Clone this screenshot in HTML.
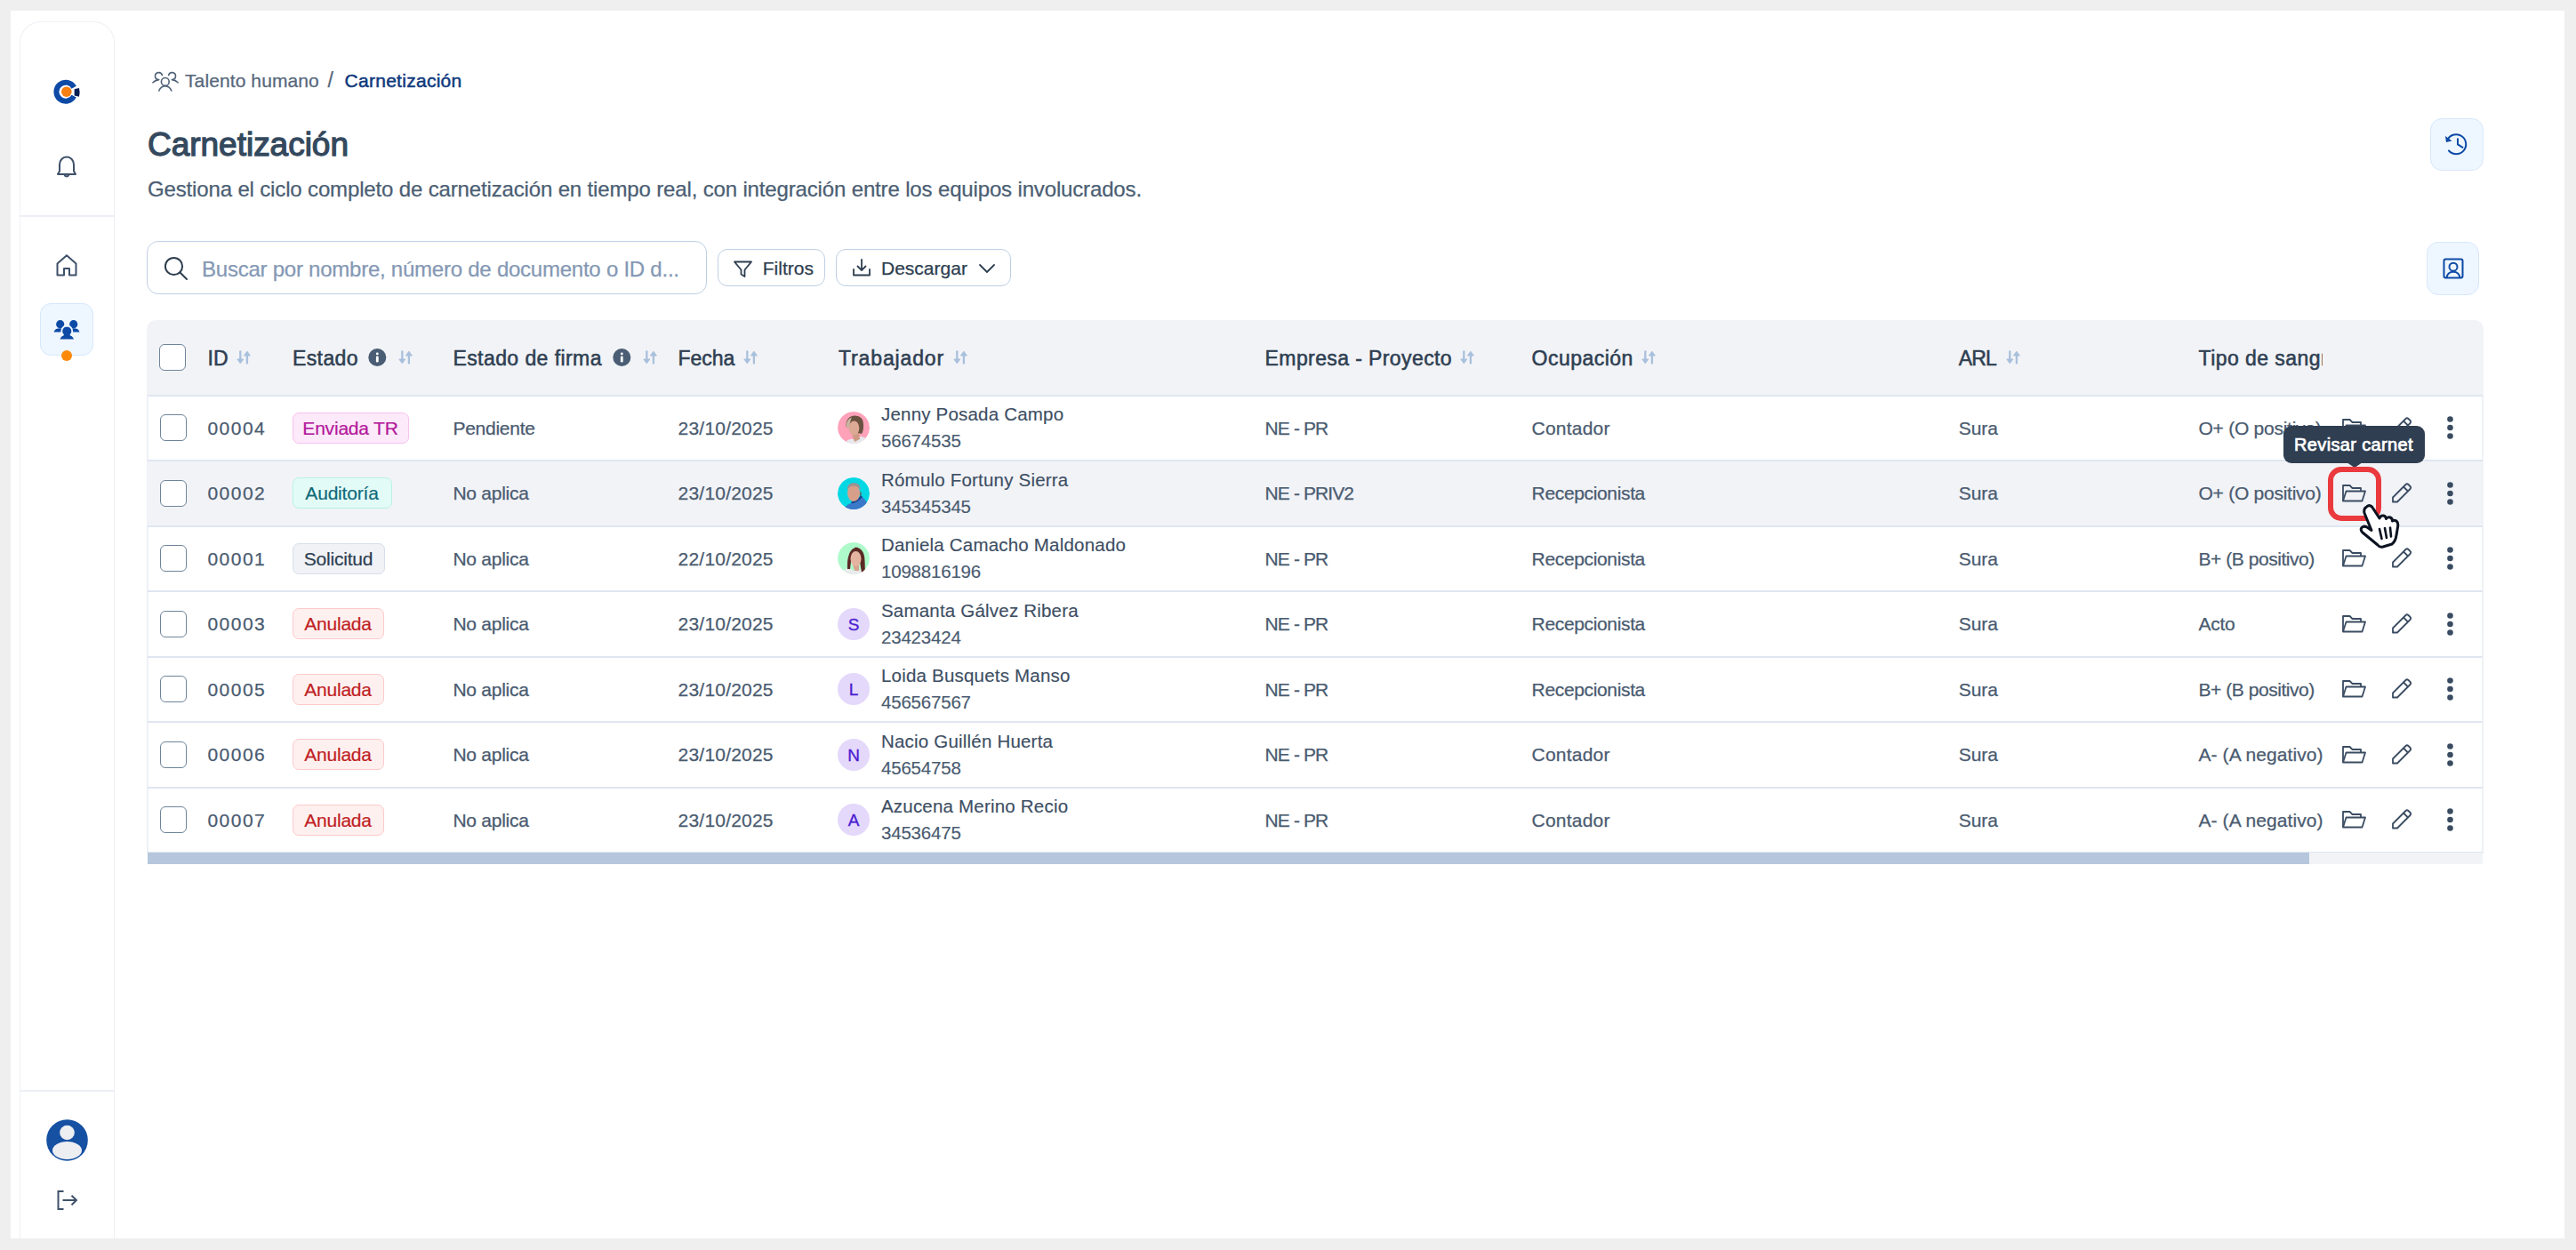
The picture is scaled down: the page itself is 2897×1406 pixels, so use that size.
<!DOCTYPE html>
<html><head><meta charset="utf-8"><title>Carnetización</title>
<style>
html,body{margin:0;padding:0;}
body{width:2897px;height:1406px;overflow:hidden;background:#efefef;position:relative;font-family:'Liberation Sans', sans-serif;}
.a{position:absolute;box-sizing:border-box;}
.t{position:absolute;white-space:nowrap;line-height:1;font-family:'Liberation Sans', sans-serif;}
</style></head><body>

<div class="a" style="left:12px;top:12px;width:2872px;height:1381px;background:#ffffff;"></div>
<div class="a" style="left:21.5px;top:24px;width:107.5px;height:1369px;border:1.7px solid #edf0f4;border-bottom:none;border-radius:24px 24px 0 0;background:#fff;"></div>
<div class="a" style="left:23px;top:241.5px;width:105px;height:2px;background:#eceff5;"></div>
<div class="a" style="left:23px;top:1226px;width:105px;height:2px;background:#eceff5;"></div>
<svg class="a" style="left:58px;top:87px;" width="34" height="34" viewBox="0 0 34 34">
<path d="M25.17 11.27 A10.5 10.5 0 1 0 25.17 21.13" fill="none" stroke="#0d4aa6" stroke-width="6"/>
<circle cx="16.8" cy="16.2" r="5.8" fill="#f57f11"/>
<path d="M25.6 13.3 L31.0 11.9 Q32.2 16.9 31.0 21.8 L25.6 20.4 Z" fill="#061f55"/>
</svg>
<svg class="a" style="left:62px;top:174px;" width="26" height="27" viewBox="0 0 26 27">
<path d="M3 22 L5 18.5 L5 11 A8 8.5 0 0 1 21 11 L21 18.5 L23 22 Z" fill="none" stroke="#3f5169" stroke-width="2" stroke-linejoin="round"/>
<path d="M10.5 22.5 A2.6 2.6 0 0 0 15.5 22.5" fill="none" stroke="#3f5169" stroke-width="2"/>
</svg>
<svg class="a" style="left:62px;top:285px;" width="26" height="27" viewBox="0 0 26 27">
<path d="M2.5 11.5 L13 2.2 L23.5 11.5 L23.5 24.5 L16 24.5 L16 17 L10 17 L10 24.5 L2.5 24.5 Z" fill="none" stroke="#3f5169" stroke-width="2" stroke-linejoin="round"/>
</svg>
<div class="a" style="left:45px;top:341px;width:60px;height:59px;background:#eef6ff;border:1.5px solid #d6e8fb;border-radius:12px;"></div>
<svg class="a" style="left:59px;top:356px;" width="32" height="28" viewBox="0 0 32 28">
<g fill="#0d4aa6">
<circle cx="8.7" cy="8.7" r="4.6"/><path d="M1.5 17.6 Q2.5 13.2 8.7 13.2 Q11 13.2 12.5 14 L11 17.6 Z"/>
<circle cx="23.7" cy="8.7" r="4.6"/><path d="M30.5 17.6 Q29.5 13.2 23.7 13.2 Q21.4 13.2 20 14 L21.5 17.6 Z"/>
</g>
<g fill="#0d4aa6" stroke="#eef6ff" stroke-width="1.8" stroke-linejoin="round">
<path d="M16.2 10.5 A6 6 0 0 1 20.5 20.6 Q24.5 22 25 26.5 L7.5 26.5 Q8 22 12 20.6 A6 6 0 0 1 16.2 10.5 Z"/>
</g>
</svg>
<div class="a" style="left:69px;top:394px;width:12px;height:12px;border-radius:50%;background:#fb8a0b;"></div>
<svg class="a" style="left:52px;top:1259px;" width="47" height="47" viewBox="0 0 47 47">
<circle cx="23.5" cy="23.5" r="23.3" fill="#1550a3"/>
<clipPath id="uc"><circle cx="23.5" cy="23.5" r="23.3"/></clipPath>
<g clip-path="url(#uc)" fill="#eceef2">
<circle cx="23.5" cy="15" r="8.3"/>
<ellipse cx="23.5" cy="35" rx="16.5" ry="10"/>
</g>
</svg>
<svg class="a" style="left:64px;top:1338px;" width="25" height="24" viewBox="0 0 25 24">
<path d="M7.5 2 L1.5 2 L1.5 22 L7.5 22" fill="none" stroke="#3f5169" stroke-width="2"/>
<path d="M6.5 12 L22 12 M16.5 6.8 L22 12 L16.5 17.2" fill="none" stroke="#3f5169" stroke-width="2" stroke-linejoin="round"/>
</svg>
<svg class="a" style="left:170px;top:79px;" width="32" height="25" viewBox="0 0 32 25">
<g fill="none" stroke="#4f6176" stroke-width="1.6" stroke-linecap="round">
<path d="M12.36 5.56 A4 4 0 1 0 7.8 10.54"/><path d="M2 13.8 Q4.5 11 8.7 10.6"/>
<path d="M19.64 5.56 A4 4 0 1 1 24.2 10.54"/><path d="M30 13.8 Q27.5 11 23.3 10.6"/>
<circle cx="15.8" cy="12.9" r="4.4"/><path d="M8.8 23 Q11 17.9 15.8 17.6 Q20.6 17.9 22.8 23"/>
</g>
</svg>
<div class="t" style="left:208.0px;top:79.5px;font-size:21px;color:#56677b;font-weight:400;letter-spacing:0.1px;-webkit-text-stroke:0.25px #56677b;">Talento humano</div>
<div class="t" style="left:368.5px;top:79.0px;font-size:23px;color:#56677b;font-weight:400;letter-spacing:0px;-webkit-text-stroke:0.25px #56677b;">/</div>
<div class="t" style="left:387.5px;top:79.5px;font-size:21px;color:#0f3a7d;font-weight:400;letter-spacing:0.28px;-webkit-text-stroke:0.5px #0f3a7d;">Carnetización</div>
<div class="t" style="left:166.0px;top:144.4px;font-size:37px;color:#34495e;font-weight:400;letter-spacing:-0.02px;-webkit-text-stroke:1.3px #34495e;">Carnetización</div>
<div class="t" style="left:166.0px;top:201.2px;font-size:24px;color:#4b5e73;font-weight:400;letter-spacing:-0.15px;-webkit-text-stroke:0.25px #4b5e73;">Gestiona el ciclo completo de carnetización en tiempo real, con integración entre los equipos involucrados.</div>
<div class="a" style="left:2733px;top:133px;width:60px;height:59px;background:#eef6ff;border:1.5px solid #d6e8fb;border-radius:13px;"></div>
<svg class="a" style="left:2748px;top:149px;" width="30" height="28" viewBox="0 0 30 28">
<g fill="none" stroke="#0d4aa6" stroke-width="2" stroke-linecap="round" stroke-linejoin="round">
<path d="M4.6 8 A11 11 0 1 1 6 20.5"/>
<path d="M16 7.2 L16 13.4 L21.5 16.8"/>
</g>
<path d="M2 4 L3 11 L9.5 9.5 Z" fill="#0d4aa6"/>
</svg>
<div class="a" style="left:165px;top:271px;width:630px;height:60px;border:1.8px solid #bfcfe4;border-radius:13px;background:#fff;"></div>
<svg class="a" style="left:184px;top:288px;" width="28" height="28" viewBox="0 0 28 28">
<g fill="none" stroke="#2d3e50" stroke-width="2" stroke-linecap="round">
<circle cx="11.5" cy="11.5" r="9.6"/><path d="M18.5 18.5 L26 26"/>
</g>
</svg>
<div class="t" style="left:227.0px;top:290.7px;font-size:24px;color:#8498b4;font-weight:400;letter-spacing:-0.24px;-webkit-text-stroke:0.25px #8498b4;">Buscar por nombre, número de documento o ID d...</div>
<div class="a" style="left:807px;top:280px;width:121px;height:42px;border:1.6px solid #bfcfe4;border-radius:11px;background:#fff;"></div>
<svg class="a" style="left:824px;top:292px;" width="24" height="21" viewBox="0 0 24 21">
<path d="M2 2.5 L21 2.5 L13.5 11.5 L13.5 19 L9.5 16.5 L9.5 11.5 Z" fill="none" stroke="#2d3e50" stroke-width="1.8" stroke-linejoin="round"/>
</svg>
<div class="t" style="left:857.8px;top:291.2px;font-size:21px;color:#2d3e50;font-weight:400;letter-spacing:0px;-webkit-text-stroke:0.25px #2d3e50;">Filtros</div>
<div class="a" style="left:940px;top:280px;width:197px;height:42px;border:1.6px solid #bfcfe4;border-radius:11px;background:#fff;"></div>
<svg class="a" style="left:957px;top:290px;" width="24" height="22" viewBox="0 0 24 22">
<g fill="none" stroke="#2d3e50" stroke-width="1.8" stroke-linecap="round" stroke-linejoin="round">
<path d="M12 2 L12 13.5 M7.5 9.5 L12 14 L16.5 9.5"/>
<path d="M3 13 L3 19.5 L21 19.5 L21 13"/>
</g>
</svg>
<div class="t" style="left:991.0px;top:291.2px;font-size:21px;color:#2d3e50;font-weight:400;letter-spacing:0px;-webkit-text-stroke:0.25px #2d3e50;">Descargar</div>
<svg class="a" style="left:1100px;top:296px;" width="20" height="12" viewBox="0 0 20 12">
<path d="M2 2 L10 10 L18 2" fill="none" stroke="#2d3e50" stroke-width="1.8" stroke-linecap="round" stroke-linejoin="round"/>
</svg>
<div class="a" style="left:2729px;top:272px;width:59px;height:60px;background:#eef6ff;border:1.5px solid #d6e8fb;border-radius:13px;"></div>
<svg class="a" style="left:2746px;top:289px;" width="26" height="26" viewBox="0 0 26 26">
<g fill="none" stroke="#0d4aa6" stroke-width="2">
<rect x="2.5" y="2.5" width="21" height="21" rx="2"/>
<circle cx="13" cy="11.2" r="4.5"/>
<path d="M5.5 23.5 Q6.5 16.8 13 16.8 Q19.5 16.8 20.5 23.5"/>
</g>
</svg>
<div class="a" style="left:165px;top:360px;width:2628px;height:86px;background:#f2f3f7;border-radius:10px 10px 0 0;"></div>
<div class="a" style="left:165px;top:444px;width:2px;height:516px;background:#eef1f6;"></div>
<div class="a" style="left:2791px;top:444px;width:2px;height:516px;background:#eef1f6;"></div>
<div class="a" style="left:166px;top:518.0px;width:2626px;height:73.5px;background:#f2f3f7;"></div>
<div class="a" style="left:166px;top:443.5px;width:2626px;height:2px;background:#dfe6f0;"></div>
<div class="a" style="left:166px;top:517.0px;width:2626px;height:2px;background:#dfe6f0;"></div>
<div class="a" style="left:166px;top:590.5px;width:2626px;height:2px;background:#dfe6f0;"></div>
<div class="a" style="left:166px;top:664.0px;width:2626px;height:2px;background:#dfe6f0;"></div>
<div class="a" style="left:166px;top:737.5px;width:2626px;height:2px;background:#dfe6f0;"></div>
<div class="a" style="left:166px;top:811.0px;width:2626px;height:2px;background:#dfe6f0;"></div>
<div class="a" style="left:166px;top:884.5px;width:2626px;height:2px;background:#dfe6f0;"></div>
<div class="a" style="left:166px;top:958.0px;width:2626px;height:2px;background:#dfe6f0;"></div>
<div class="a" style="left:166px;top:958.5px;width:2626px;height:13.5px;background:#f1f3f6;"></div>
<div class="a" style="left:166px;top:958.5px;width:2431px;height:13.5px;background:#b6c7dd;"></div>
<div class="a" style="left:179px;top:387px;width:30px;height:30px;border:1.8px solid #6f849a;border-radius:6px;background:#fff;"></div>
<div class="t" style="left:233.4px;top:391.5px;font-size:23px;color:#2f3f52;font-weight:400;letter-spacing:0.3px;-webkit-text-stroke:0.55px #2f3f52;">ID</div>
<svg class="a" style="left:266px;top:394px;" width="16" height="17" viewBox="0 0 16 17"><g fill="none" stroke="#a9c0dc" stroke-width="2.3" stroke-linecap="round"><path d="M4.3 1.3 L4.3 11"/><path d="M11.9 14.6 L11.9 5"/></g>
<g fill="#a9c0dc" stroke="#a9c0dc" stroke-width="1" stroke-linejoin="round"><path d="M0.8 10 L7.8 10 L4.3 14.8 Z"/><path d="M8.4 6 L15.4 6 L11.9 1.2 Z"/></g></svg>
<div class="t" style="left:328.9px;top:391.5px;font-size:23px;color:#2f3f52;font-weight:400;letter-spacing:0.42px;-webkit-text-stroke:0.55px #2f3f52;">Estado</div>
<svg class="a" style="left:414px;top:392px;" width="21" height="21" viewBox="0 0 21 21"><circle cx="10.3" cy="10" r="10" fill="#4a5d74"/>
<rect x="8.9" y="4.6" width="2.8" height="2.6" rx="1.2" fill="#fff"/><rect x="8.9" y="8.6" width="2.8" height="6.8" rx="1.2" fill="#fff"/></svg>
<svg class="a" style="left:448px;top:394px;" width="16" height="17" viewBox="0 0 16 17"><g fill="none" stroke="#a9c0dc" stroke-width="2.3" stroke-linecap="round"><path d="M4.3 1.3 L4.3 11"/><path d="M11.9 14.6 L11.9 5"/></g>
<g fill="#a9c0dc" stroke="#a9c0dc" stroke-width="1" stroke-linejoin="round"><path d="M0.8 10 L7.8 10 L4.3 14.8 Z"/><path d="M8.4 6 L15.4 6 L11.9 1.2 Z"/></g></svg>
<div class="t" style="left:509.4px;top:391.5px;font-size:23px;color:#2f3f52;font-weight:400;letter-spacing:0.43px;-webkit-text-stroke:0.55px #2f3f52;">Estado de firma</div>
<svg class="a" style="left:689px;top:392px;" width="21" height="21" viewBox="0 0 21 21"><circle cx="10.3" cy="10" r="10" fill="#4a5d74"/>
<rect x="8.9" y="4.6" width="2.8" height="2.6" rx="1.2" fill="#fff"/><rect x="8.9" y="8.6" width="2.8" height="6.8" rx="1.2" fill="#fff"/></svg>
<svg class="a" style="left:723px;top:394px;" width="16" height="17" viewBox="0 0 16 17"><g fill="none" stroke="#a9c0dc" stroke-width="2.3" stroke-linecap="round"><path d="M4.3 1.3 L4.3 11"/><path d="M11.9 14.6 L11.9 5"/></g>
<g fill="#a9c0dc" stroke="#a9c0dc" stroke-width="1" stroke-linejoin="round"><path d="M0.8 10 L7.8 10 L4.3 14.8 Z"/><path d="M8.4 6 L15.4 6 L11.9 1.2 Z"/></g></svg>
<div class="t" style="left:762.6px;top:391.5px;font-size:23px;color:#2f3f52;font-weight:400;letter-spacing:-0.07px;-webkit-text-stroke:0.55px #2f3f52;">Fecha</div>
<svg class="a" style="left:836px;top:394px;" width="16" height="17" viewBox="0 0 16 17"><g fill="none" stroke="#a9c0dc" stroke-width="2.3" stroke-linecap="round"><path d="M4.3 1.3 L4.3 11"/><path d="M11.9 14.6 L11.9 5"/></g>
<g fill="#a9c0dc" stroke="#a9c0dc" stroke-width="1" stroke-linejoin="round"><path d="M0.8 10 L7.8 10 L4.3 14.8 Z"/><path d="M8.4 6 L15.4 6 L11.9 1.2 Z"/></g></svg>
<div class="t" style="left:943.0px;top:391.5px;font-size:23px;color:#2f3f52;font-weight:400;letter-spacing:0.86px;-webkit-text-stroke:0.55px #2f3f52;">Trabajador</div>
<svg class="a" style="left:1071.5px;top:394px;" width="16" height="17" viewBox="0 0 16 17"><g fill="none" stroke="#a9c0dc" stroke-width="2.3" stroke-linecap="round"><path d="M4.3 1.3 L4.3 11"/><path d="M11.9 14.6 L11.9 5"/></g>
<g fill="#a9c0dc" stroke="#a9c0dc" stroke-width="1" stroke-linejoin="round"><path d="M0.8 10 L7.8 10 L4.3 14.8 Z"/><path d="M8.4 6 L15.4 6 L11.9 1.2 Z"/></g></svg>
<div class="t" style="left:1422.6px;top:391.5px;font-size:23px;color:#2f3f52;font-weight:400;letter-spacing:0.4px;-webkit-text-stroke:0.55px #2f3f52;">Empresa - Proyecto</div>
<svg class="a" style="left:1642px;top:394px;" width="16" height="17" viewBox="0 0 16 17"><g fill="none" stroke="#a9c0dc" stroke-width="2.3" stroke-linecap="round"><path d="M4.3 1.3 L4.3 11"/><path d="M11.9 14.6 L11.9 5"/></g>
<g fill="#a9c0dc" stroke="#a9c0dc" stroke-width="1" stroke-linejoin="round"><path d="M0.8 10 L7.8 10 L4.3 14.8 Z"/><path d="M8.4 6 L15.4 6 L11.9 1.2 Z"/></g></svg>
<div class="t" style="left:1722.6px;top:391.5px;font-size:23px;color:#2f3f52;font-weight:400;letter-spacing:0.47px;-webkit-text-stroke:0.55px #2f3f52;">Ocupación</div>
<svg class="a" style="left:1846px;top:394px;" width="16" height="17" viewBox="0 0 16 17"><g fill="none" stroke="#a9c0dc" stroke-width="2.3" stroke-linecap="round"><path d="M4.3 1.3 L4.3 11"/><path d="M11.9 14.6 L11.9 5"/></g>
<g fill="#a9c0dc" stroke="#a9c0dc" stroke-width="1" stroke-linejoin="round"><path d="M0.8 10 L7.8 10 L4.3 14.8 Z"/><path d="M8.4 6 L15.4 6 L11.9 1.2 Z"/></g></svg>
<div class="t" style="left:2202.7px;top:391.5px;font-size:23px;color:#2f3f52;font-weight:400;letter-spacing:-0.82px;-webkit-text-stroke:0.55px #2f3f52;">ARL</div>
<svg class="a" style="left:2256px;top:394px;" width="16" height="17" viewBox="0 0 16 17"><g fill="none" stroke="#a9c0dc" stroke-width="2.3" stroke-linecap="round"><path d="M4.3 1.3 L4.3 11"/><path d="M11.9 14.6 L11.9 5"/></g>
<g fill="#a9c0dc" stroke="#a9c0dc" stroke-width="1" stroke-linejoin="round"><path d="M0.8 10 L7.8 10 L4.3 14.8 Z"/><path d="M8.4 6 L15.4 6 L11.9 1.2 Z"/></g></svg>
<div class="a" style="left:2470px;top:380px;width:142px;height:40px;overflow:hidden;">
<div class="t" style="left:2.5px;top:11.5px;font-size:23px;color:#2f3f52;font-weight:400;letter-spacing:0.45px;-webkit-text-stroke:0.55px #2f3f52">Tipo de sangre</div></div>
<div class="a" style="left:180px;top:466.25px;width:30px;height:30px;border:1.8px solid #6f849a;border-radius:6px;background:#fff;"></div>
<div class="t" style="left:233.4px;top:470.7px;font-size:21px;color:#4a5b70;font-weight:400;letter-spacing:1.5px;-webkit-text-stroke:0.25px #4a5b70;">00004</div>
<div class="a" style="left:328.5px;top:463.6px;width:131px;height:35px;background:#fce9f9;border:1.5px solid #f6c3ef;border-radius:7px;"></div>
<div class="t" style="left:328.5px;width:131px;text-align:center;top:470.7px;font-size:21px;color:#b3179b;letter-spacing:-0.2px;-webkit-text-stroke:0.2px #b3179b">Enviada TR</div>
<div class="t" style="left:509.4px;top:470.7px;font-size:21px;color:#4a5b70;font-weight:400;letter-spacing:-0.25px;-webkit-text-stroke:0.25px #4a5b70;">Pendiente</div>
<div class="t" style="left:762.6px;top:470.7px;font-size:21px;color:#4a5b70;font-weight:400;letter-spacing:0.2px;-webkit-text-stroke:0.25px #4a5b70;">23/10/2025</div>
<svg class="a" style="left:942px;top:463px;" width="36" height="36" viewBox="0 0 36 36"><clipPath id="c0"><circle cx="18" cy="18" r="18"/></clipPath><g clip-path="url(#c0)"><circle cx="18" cy="18" r="18" fill="#fea1b9"/>
<path d="M9 36 L10 33 Q14 30 18 31 L24 28 Q30 28 33 31 L36 36 Z" fill="#e6e9ee"/>
<path d="M16 25 L24 24 L25 31 L19 34 Z" fill="#cf9a83"/>
<path d="M9.5 17 Q9 5 19.5 4.5 Q29 5 29 14 Q29.5 21 27 25 L23 24 Z" fill="#6a5140"/>
<path d="M9.5 17 Q10 8 16 6.5 Q13 12 14 20 Z" fill="#c9b59f"/>
<ellipse cx="18.5" cy="18.5" rx="5.8" ry="8" fill="#dca995"/></g></svg>
<div class="t" style="left:991.0px;top:456.3px;font-size:20.5px;color:#3d4e63;font-weight:400;letter-spacing:0.2px;-webkit-text-stroke:0.15px #3d4e63;">Jenny Posada Campo</div>
<div class="t" style="left:991.0px;top:486.1px;font-size:20.5px;color:#4a5b70;font-weight:400;letter-spacing:-0.2px;-webkit-text-stroke:0.15px #4a5b70;">56674535</div>
<div class="t" style="left:1422.6px;top:470.7px;font-size:21px;color:#4a5b70;font-weight:400;letter-spacing:-0.9px;-webkit-text-stroke:0.25px #4a5b70;">NE - PR</div>
<div class="t" style="left:1722.6px;top:470.7px;font-size:21px;color:#4a5b70;font-weight:400;letter-spacing:0.2px;-webkit-text-stroke:0.25px #4a5b70;">Contador</div>
<div class="t" style="left:2202.7px;top:470.7px;font-size:21px;color:#4a5b70;font-weight:400;letter-spacing:0px;-webkit-text-stroke:0.25px #4a5b70;">Sura</div>
<div class="t" style="left:2472.5px;top:470.7px;font-size:21px;color:#4a5b70;font-weight:400;letter-spacing:-0.25px;-webkit-text-stroke:0.25px #4a5b70;">O+ (O positivo)</div>
<svg class="a" style="left:2633px;top:470px;" width="29" height="22" viewBox="0 0 29 22"><g fill="none" stroke="#3a4c62" stroke-width="1.8" stroke-linejoin="round">
<path d="M2 19.5 L2 2 L9.5 2 L12.5 5 L22 5 L22 8.5"/>
<path d="M2 19.5 L5.5 8.5 L27 8.5 L23.5 19.5 Z"/></g></svg>
<svg class="a" style="left:2689px;top:468px;" width="25" height="25" viewBox="0 0 25 25"><g fill="none" stroke="#3a4c62" stroke-width="1.8" stroke-linejoin="round">
<path d="M2 17.5 L16.5 3 Q18 1.5 19.5 3 L21.5 5 Q23 6.5 21.5 8 L7 22.5 L2 22.5 Z"/><path d="M14 5.5 L19 10.5"/></g></svg>
<svg class="a" style="left:2749px;top:466px;" width="13" height="30" viewBox="0 0 13 30"><g fill="#3a4c62"><circle cx="6.5" cy="5.5" r="3.3"/><circle cx="6.5" cy="15" r="3.3"/><circle cx="6.5" cy="24.5" r="3.3"/></g></svg>
<div class="a" style="left:180px;top:539.75px;width:30px;height:30px;border:1.8px solid #6f849a;border-radius:6px;background:#fff;"></div>
<div class="t" style="left:233.4px;top:544.2px;font-size:21px;color:#4a5b70;font-weight:400;letter-spacing:1.5px;-webkit-text-stroke:0.25px #4a5b70;">00002</div>
<div class="a" style="left:328.5px;top:537.1px;width:112px;height:35px;background:#e3fbf7;border:1.5px solid #b8f1e6;border-radius:7px;"></div>
<div class="t" style="left:328.5px;width:112px;text-align:center;top:544.2px;font-size:21px;color:#0f6a7a;letter-spacing:-0.2px;-webkit-text-stroke:0.2px #0f6a7a">Auditoría</div>
<div class="t" style="left:509.4px;top:544.2px;font-size:21px;color:#4a5b70;font-weight:400;letter-spacing:-0.25px;-webkit-text-stroke:0.25px #4a5b70;">No aplica</div>
<div class="t" style="left:762.6px;top:544.2px;font-size:21px;color:#4a5b70;font-weight:400;letter-spacing:0.2px;-webkit-text-stroke:0.25px #4a5b70;">23/10/2025</div>
<svg class="a" style="left:942px;top:537px;" width="36" height="36" viewBox="0 0 36 36"><clipPath id="c1"><circle cx="18" cy="18" r="18"/></clipPath><g clip-path="url(#c1)"><circle cx="18" cy="18" r="18" fill="#01d8e4"/>
<path d="M7 36 Q9 31 15 29 Q22 26 28 22 Q33 26 36 36 Z" fill="#3a78c9"/>
<path d="M15 29 Q20 30 28 22 L26 20 Q22 27 16 27 Z" fill="#1d3f86"/>
<ellipse cx="18" cy="17.5" rx="7" ry="9.5" fill="#d79f8a"/>
<path d="M10.5 14 Q11 6 18.5 6 Q26 6.5 25.8 15 Q24 10 18.5 9.5 Q13 9.5 10.5 14 Z" fill="#9a9394"/>
<path d="M25.8 15 L27 19 L25 21 Z" fill="#7a4a3e"/></g></svg>
<div class="t" style="left:991.0px;top:529.8px;font-size:20.5px;color:#3d4e63;font-weight:400;letter-spacing:0.2px;-webkit-text-stroke:0.15px #3d4e63;">Rómulo Fortuny Sierra</div>
<div class="t" style="left:991.0px;top:559.6px;font-size:20.5px;color:#4a5b70;font-weight:400;letter-spacing:-0.2px;-webkit-text-stroke:0.15px #4a5b70;">345345345</div>
<div class="t" style="left:1422.6px;top:544.2px;font-size:21px;color:#4a5b70;font-weight:400;letter-spacing:-0.9px;-webkit-text-stroke:0.25px #4a5b70;">NE - PRIV2</div>
<div class="t" style="left:1722.6px;top:544.2px;font-size:21px;color:#4a5b70;font-weight:400;letter-spacing:-0.35px;-webkit-text-stroke:0.25px #4a5b70;">Recepcionista</div>
<div class="t" style="left:2202.7px;top:544.2px;font-size:21px;color:#4a5b70;font-weight:400;letter-spacing:0px;-webkit-text-stroke:0.25px #4a5b70;">Sura</div>
<div class="t" style="left:2472.5px;top:544.2px;font-size:21px;color:#4a5b70;font-weight:400;letter-spacing:-0.25px;-webkit-text-stroke:0.25px #4a5b70;">O+ (O positivo)</div>
<svg class="a" style="left:2633px;top:544px;" width="29" height="22" viewBox="0 0 29 22"><g fill="none" stroke="#3a4c62" stroke-width="1.8" stroke-linejoin="round">
<path d="M2 19.5 L2 2 L9.5 2 L12.5 5 L22 5 L22 8.5"/>
<path d="M2 19.5 L5.5 8.5 L27 8.5 L23.5 19.5 Z"/></g></svg>
<svg class="a" style="left:2689px;top:542px;" width="25" height="25" viewBox="0 0 25 25"><g fill="none" stroke="#3a4c62" stroke-width="1.8" stroke-linejoin="round">
<path d="M2 17.5 L16.5 3 Q18 1.5 19.5 3 L21.5 5 Q23 6.5 21.5 8 L7 22.5 L2 22.5 Z"/><path d="M14 5.5 L19 10.5"/></g></svg>
<svg class="a" style="left:2749px;top:540px;" width="13" height="30" viewBox="0 0 13 30"><g fill="#3a4c62"><circle cx="6.5" cy="5.5" r="3.3"/><circle cx="6.5" cy="15" r="3.3"/><circle cx="6.5" cy="24.5" r="3.3"/></g></svg>
<div class="a" style="left:180px;top:613.25px;width:30px;height:30px;border:1.8px solid #6f849a;border-radius:6px;background:#fff;"></div>
<div class="t" style="left:233.4px;top:617.7px;font-size:21px;color:#4a5b70;font-weight:400;letter-spacing:1.5px;-webkit-text-stroke:0.25px #4a5b70;">00001</div>
<div class="a" style="left:328.5px;top:610.6px;width:104px;height:35px;background:#f0f2f6;border:1.5px solid #d5dfeb;border-radius:7px;"></div>
<div class="t" style="left:328.5px;width:104px;text-align:center;top:617.7px;font-size:21px;color:#2d3e50;letter-spacing:-0.2px;-webkit-text-stroke:0.2px #2d3e50">Solicitud</div>
<div class="t" style="left:509.4px;top:617.7px;font-size:21px;color:#4a5b70;font-weight:400;letter-spacing:-0.25px;-webkit-text-stroke:0.25px #4a5b70;">No aplica</div>
<div class="t" style="left:762.6px;top:617.7px;font-size:21px;color:#4a5b70;font-weight:400;letter-spacing:0.2px;-webkit-text-stroke:0.25px #4a5b70;">22/10/2025</div>
<svg class="a" style="left:942px;top:610px;" width="36" height="36" viewBox="0 0 36 36"><clipPath id="c2"><circle cx="18" cy="18" r="18"/></clipPath><g clip-path="url(#c2)"><circle cx="18" cy="18" r="18" fill="#aefacb"/>
<path d="M4 36 Q6 30 12 29 L19 32 L27 30 Q32 32 34 36 Z" fill="#e9eaeb"/>
<path d="M11 30 Q10 9 20.5 5.5 Q30 7 30.5 20 Q31 31 30.5 34 L27 34 L25 22 L15 22 L14 30 Z" fill="#5c2a24"/>
<path d="M17 25 L24 25 L24 32 L19 32 Z" fill="#d9a48f"/>
<ellipse cx="20.5" cy="18.5" rx="6" ry="8.5" fill="#e4b4a0"/></g></svg>
<div class="t" style="left:991.0px;top:603.3px;font-size:20.5px;color:#3d4e63;font-weight:400;letter-spacing:0.2px;-webkit-text-stroke:0.15px #3d4e63;">Daniela Camacho Maldonado</div>
<div class="t" style="left:991.0px;top:633.1px;font-size:20.5px;color:#4a5b70;font-weight:400;letter-spacing:-0.2px;-webkit-text-stroke:0.15px #4a5b70;">1098816196</div>
<div class="t" style="left:1422.6px;top:617.7px;font-size:21px;color:#4a5b70;font-weight:400;letter-spacing:-0.9px;-webkit-text-stroke:0.25px #4a5b70;">NE - PR</div>
<div class="t" style="left:1722.6px;top:617.7px;font-size:21px;color:#4a5b70;font-weight:400;letter-spacing:-0.35px;-webkit-text-stroke:0.25px #4a5b70;">Recepcionista</div>
<div class="t" style="left:2202.7px;top:617.7px;font-size:21px;color:#4a5b70;font-weight:400;letter-spacing:0px;-webkit-text-stroke:0.25px #4a5b70;">Sura</div>
<div class="t" style="left:2472.5px;top:617.7px;font-size:21px;color:#4a5b70;font-weight:400;letter-spacing:-0.45px;-webkit-text-stroke:0.25px #4a5b70;">B+ (B positivo)</div>
<svg class="a" style="left:2633px;top:617px;" width="29" height="22" viewBox="0 0 29 22"><g fill="none" stroke="#3a4c62" stroke-width="1.8" stroke-linejoin="round">
<path d="M2 19.5 L2 2 L9.5 2 L12.5 5 L22 5 L22 8.5"/>
<path d="M2 19.5 L5.5 8.5 L27 8.5 L23.5 19.5 Z"/></g></svg>
<svg class="a" style="left:2689px;top:615px;" width="25" height="25" viewBox="0 0 25 25"><g fill="none" stroke="#3a4c62" stroke-width="1.8" stroke-linejoin="round">
<path d="M2 17.5 L16.5 3 Q18 1.5 19.5 3 L21.5 5 Q23 6.5 21.5 8 L7 22.5 L2 22.5 Z"/><path d="M14 5.5 L19 10.5"/></g></svg>
<svg class="a" style="left:2749px;top:613px;" width="13" height="30" viewBox="0 0 13 30"><g fill="#3a4c62"><circle cx="6.5" cy="5.5" r="3.3"/><circle cx="6.5" cy="15" r="3.3"/><circle cx="6.5" cy="24.5" r="3.3"/></g></svg>
<div class="a" style="left:180px;top:686.75px;width:30px;height:30px;border:1.8px solid #6f849a;border-radius:6px;background:#fff;"></div>
<div class="t" style="left:233.4px;top:691.2px;font-size:21px;color:#4a5b70;font-weight:400;letter-spacing:1.5px;-webkit-text-stroke:0.25px #4a5b70;">00003</div>
<div class="a" style="left:328.5px;top:684.1px;width:103px;height:35px;background:#fff0f0;border:1.5px solid #fdcaca;border-radius:7px;"></div>
<div class="t" style="left:328.5px;width:103px;text-align:center;top:691.2px;font-size:21px;color:#c01f24;letter-spacing:-0.2px;-webkit-text-stroke:0.2px #c01f24">Anulada</div>
<div class="t" style="left:509.4px;top:691.2px;font-size:21px;color:#4a5b70;font-weight:400;letter-spacing:-0.25px;-webkit-text-stroke:0.25px #4a5b70;">No aplica</div>
<div class="t" style="left:762.6px;top:691.2px;font-size:21px;color:#4a5b70;font-weight:400;letter-spacing:0.2px;-webkit-text-stroke:0.25px #4a5b70;">23/10/2025</div>
<div class="a" style="left:942px;top:683.8px;width:36px;height:36px;border-radius:50%;background:#e4d8fb;"></div>
<div class="t" style="left:942px;width:36px;text-align:center;top:692.7px;font-size:19px;color:#4b1fd1;-webkit-text-stroke:0.35px #4b1fd1;">S</div>
<div class="t" style="left:991.0px;top:676.8px;font-size:20.5px;color:#3d4e63;font-weight:400;letter-spacing:0.2px;-webkit-text-stroke:0.15px #3d4e63;">Samanta Gálvez Ribera</div>
<div class="t" style="left:991.0px;top:706.6px;font-size:20.5px;color:#4a5b70;font-weight:400;letter-spacing:-0.2px;-webkit-text-stroke:0.15px #4a5b70;">23423424</div>
<div class="t" style="left:1422.6px;top:691.2px;font-size:21px;color:#4a5b70;font-weight:400;letter-spacing:-0.9px;-webkit-text-stroke:0.25px #4a5b70;">NE - PR</div>
<div class="t" style="left:1722.6px;top:691.2px;font-size:21px;color:#4a5b70;font-weight:400;letter-spacing:-0.35px;-webkit-text-stroke:0.25px #4a5b70;">Recepcionista</div>
<div class="t" style="left:2202.7px;top:691.2px;font-size:21px;color:#4a5b70;font-weight:400;letter-spacing:0px;-webkit-text-stroke:0.25px #4a5b70;">Sura</div>
<div class="t" style="left:2472.5px;top:691.2px;font-size:21px;color:#4a5b70;font-weight:400;letter-spacing:-0.25px;-webkit-text-stroke:0.25px #4a5b70;">Acto</div>
<svg class="a" style="left:2633px;top:691px;" width="29" height="22" viewBox="0 0 29 22"><g fill="none" stroke="#3a4c62" stroke-width="1.8" stroke-linejoin="round">
<path d="M2 19.5 L2 2 L9.5 2 L12.5 5 L22 5 L22 8.5"/>
<path d="M2 19.5 L5.5 8.5 L27 8.5 L23.5 19.5 Z"/></g></svg>
<svg class="a" style="left:2689px;top:689px;" width="25" height="25" viewBox="0 0 25 25"><g fill="none" stroke="#3a4c62" stroke-width="1.8" stroke-linejoin="round">
<path d="M2 17.5 L16.5 3 Q18 1.5 19.5 3 L21.5 5 Q23 6.5 21.5 8 L7 22.5 L2 22.5 Z"/><path d="M14 5.5 L19 10.5"/></g></svg>
<svg class="a" style="left:2749px;top:687px;" width="13" height="30" viewBox="0 0 13 30"><g fill="#3a4c62"><circle cx="6.5" cy="5.5" r="3.3"/><circle cx="6.5" cy="15" r="3.3"/><circle cx="6.5" cy="24.5" r="3.3"/></g></svg>
<div class="a" style="left:180px;top:760.25px;width:30px;height:30px;border:1.8px solid #6f849a;border-radius:6px;background:#fff;"></div>
<div class="t" style="left:233.4px;top:764.7px;font-size:21px;color:#4a5b70;font-weight:400;letter-spacing:1.5px;-webkit-text-stroke:0.25px #4a5b70;">00005</div>
<div class="a" style="left:328.5px;top:757.6px;width:103px;height:35px;background:#fff0f0;border:1.5px solid #fdcaca;border-radius:7px;"></div>
<div class="t" style="left:328.5px;width:103px;text-align:center;top:764.7px;font-size:21px;color:#c01f24;letter-spacing:-0.2px;-webkit-text-stroke:0.2px #c01f24">Anulada</div>
<div class="t" style="left:509.4px;top:764.7px;font-size:21px;color:#4a5b70;font-weight:400;letter-spacing:-0.25px;-webkit-text-stroke:0.25px #4a5b70;">No aplica</div>
<div class="t" style="left:762.6px;top:764.7px;font-size:21px;color:#4a5b70;font-weight:400;letter-spacing:0.2px;-webkit-text-stroke:0.25px #4a5b70;">23/10/2025</div>
<div class="a" style="left:942px;top:757.2px;width:36px;height:36px;border-radius:50%;background:#e4d8fb;"></div>
<div class="t" style="left:942px;width:36px;text-align:center;top:766.2px;font-size:19px;color:#4b1fd1;-webkit-text-stroke:0.35px #4b1fd1;">L</div>
<div class="t" style="left:991.0px;top:750.3px;font-size:20.5px;color:#3d4e63;font-weight:400;letter-spacing:0.2px;-webkit-text-stroke:0.15px #3d4e63;">Loida Busquets Manso</div>
<div class="t" style="left:991.0px;top:780.1px;font-size:20.5px;color:#4a5b70;font-weight:400;letter-spacing:-0.2px;-webkit-text-stroke:0.15px #4a5b70;">456567567</div>
<div class="t" style="left:1422.6px;top:764.7px;font-size:21px;color:#4a5b70;font-weight:400;letter-spacing:-0.9px;-webkit-text-stroke:0.25px #4a5b70;">NE - PR</div>
<div class="t" style="left:1722.6px;top:764.7px;font-size:21px;color:#4a5b70;font-weight:400;letter-spacing:-0.35px;-webkit-text-stroke:0.25px #4a5b70;">Recepcionista</div>
<div class="t" style="left:2202.7px;top:764.7px;font-size:21px;color:#4a5b70;font-weight:400;letter-spacing:0px;-webkit-text-stroke:0.25px #4a5b70;">Sura</div>
<div class="t" style="left:2472.5px;top:764.7px;font-size:21px;color:#4a5b70;font-weight:400;letter-spacing:-0.45px;-webkit-text-stroke:0.25px #4a5b70;">B+ (B positivo)</div>
<svg class="a" style="left:2633px;top:764px;" width="29" height="22" viewBox="0 0 29 22"><g fill="none" stroke="#3a4c62" stroke-width="1.8" stroke-linejoin="round">
<path d="M2 19.5 L2 2 L9.5 2 L12.5 5 L22 5 L22 8.5"/>
<path d="M2 19.5 L5.5 8.5 L27 8.5 L23.5 19.5 Z"/></g></svg>
<svg class="a" style="left:2689px;top:762px;" width="25" height="25" viewBox="0 0 25 25"><g fill="none" stroke="#3a4c62" stroke-width="1.8" stroke-linejoin="round">
<path d="M2 17.5 L16.5 3 Q18 1.5 19.5 3 L21.5 5 Q23 6.5 21.5 8 L7 22.5 L2 22.5 Z"/><path d="M14 5.5 L19 10.5"/></g></svg>
<svg class="a" style="left:2749px;top:760px;" width="13" height="30" viewBox="0 0 13 30"><g fill="#3a4c62"><circle cx="6.5" cy="5.5" r="3.3"/><circle cx="6.5" cy="15" r="3.3"/><circle cx="6.5" cy="24.5" r="3.3"/></g></svg>
<div class="a" style="left:180px;top:833.75px;width:30px;height:30px;border:1.8px solid #6f849a;border-radius:6px;background:#fff;"></div>
<div class="t" style="left:233.4px;top:838.2px;font-size:21px;color:#4a5b70;font-weight:400;letter-spacing:1.5px;-webkit-text-stroke:0.25px #4a5b70;">00006</div>
<div class="a" style="left:328.5px;top:831.1px;width:103px;height:35px;background:#fff0f0;border:1.5px solid #fdcaca;border-radius:7px;"></div>
<div class="t" style="left:328.5px;width:103px;text-align:center;top:838.2px;font-size:21px;color:#c01f24;letter-spacing:-0.2px;-webkit-text-stroke:0.2px #c01f24">Anulada</div>
<div class="t" style="left:509.4px;top:838.2px;font-size:21px;color:#4a5b70;font-weight:400;letter-spacing:-0.25px;-webkit-text-stroke:0.25px #4a5b70;">No aplica</div>
<div class="t" style="left:762.6px;top:838.2px;font-size:21px;color:#4a5b70;font-weight:400;letter-spacing:0.2px;-webkit-text-stroke:0.25px #4a5b70;">23/10/2025</div>
<div class="a" style="left:942px;top:830.8px;width:36px;height:36px;border-radius:50%;background:#e4d8fb;"></div>
<div class="t" style="left:942px;width:36px;text-align:center;top:839.7px;font-size:19px;color:#4b1fd1;-webkit-text-stroke:0.35px #4b1fd1;">N</div>
<div class="t" style="left:991.0px;top:823.8px;font-size:20.5px;color:#3d4e63;font-weight:400;letter-spacing:0.2px;-webkit-text-stroke:0.15px #3d4e63;">Nacio Guillén Huerta</div>
<div class="t" style="left:991.0px;top:853.6px;font-size:20.5px;color:#4a5b70;font-weight:400;letter-spacing:-0.2px;-webkit-text-stroke:0.15px #4a5b70;">45654758</div>
<div class="t" style="left:1422.6px;top:838.2px;font-size:21px;color:#4a5b70;font-weight:400;letter-spacing:-0.9px;-webkit-text-stroke:0.25px #4a5b70;">NE - PR</div>
<div class="t" style="left:1722.6px;top:838.2px;font-size:21px;color:#4a5b70;font-weight:400;letter-spacing:0.2px;-webkit-text-stroke:0.25px #4a5b70;">Contador</div>
<div class="t" style="left:2202.7px;top:838.2px;font-size:21px;color:#4a5b70;font-weight:400;letter-spacing:0px;-webkit-text-stroke:0.25px #4a5b70;">Sura</div>
<div class="t" style="left:2472.5px;top:838.2px;font-size:21px;color:#4a5b70;font-weight:400;letter-spacing:0.08px;-webkit-text-stroke:0.25px #4a5b70;">A- (A negativo)</div>
<svg class="a" style="left:2633px;top:838px;" width="29" height="22" viewBox="0 0 29 22"><g fill="none" stroke="#3a4c62" stroke-width="1.8" stroke-linejoin="round">
<path d="M2 19.5 L2 2 L9.5 2 L12.5 5 L22 5 L22 8.5"/>
<path d="M2 19.5 L5.5 8.5 L27 8.5 L23.5 19.5 Z"/></g></svg>
<svg class="a" style="left:2689px;top:836px;" width="25" height="25" viewBox="0 0 25 25"><g fill="none" stroke="#3a4c62" stroke-width="1.8" stroke-linejoin="round">
<path d="M2 17.5 L16.5 3 Q18 1.5 19.5 3 L21.5 5 Q23 6.5 21.5 8 L7 22.5 L2 22.5 Z"/><path d="M14 5.5 L19 10.5"/></g></svg>
<svg class="a" style="left:2749px;top:834px;" width="13" height="30" viewBox="0 0 13 30"><g fill="#3a4c62"><circle cx="6.5" cy="5.5" r="3.3"/><circle cx="6.5" cy="15" r="3.3"/><circle cx="6.5" cy="24.5" r="3.3"/></g></svg>
<div class="a" style="left:180px;top:907.25px;width:30px;height:30px;border:1.8px solid #6f849a;border-radius:6px;background:#fff;"></div>
<div class="t" style="left:233.4px;top:911.7px;font-size:21px;color:#4a5b70;font-weight:400;letter-spacing:1.5px;-webkit-text-stroke:0.25px #4a5b70;">00007</div>
<div class="a" style="left:328.5px;top:904.6px;width:103px;height:35px;background:#fff0f0;border:1.5px solid #fdcaca;border-radius:7px;"></div>
<div class="t" style="left:328.5px;width:103px;text-align:center;top:911.7px;font-size:21px;color:#c01f24;letter-spacing:-0.2px;-webkit-text-stroke:0.2px #c01f24">Anulada</div>
<div class="t" style="left:509.4px;top:911.7px;font-size:21px;color:#4a5b70;font-weight:400;letter-spacing:-0.25px;-webkit-text-stroke:0.25px #4a5b70;">No aplica</div>
<div class="t" style="left:762.6px;top:911.7px;font-size:21px;color:#4a5b70;font-weight:400;letter-spacing:0.2px;-webkit-text-stroke:0.25px #4a5b70;">23/10/2025</div>
<div class="a" style="left:942px;top:904.2px;width:36px;height:36px;border-radius:50%;background:#e4d8fb;"></div>
<div class="t" style="left:942px;width:36px;text-align:center;top:913.2px;font-size:19px;color:#4b1fd1;-webkit-text-stroke:0.35px #4b1fd1;">A</div>
<div class="t" style="left:991.0px;top:897.3px;font-size:20.5px;color:#3d4e63;font-weight:400;letter-spacing:0.2px;-webkit-text-stroke:0.15px #3d4e63;">Azucena Merino Recio</div>
<div class="t" style="left:991.0px;top:927.1px;font-size:20.5px;color:#4a5b70;font-weight:400;letter-spacing:-0.2px;-webkit-text-stroke:0.15px #4a5b70;">34536475</div>
<div class="t" style="left:1422.6px;top:911.7px;font-size:21px;color:#4a5b70;font-weight:400;letter-spacing:-0.9px;-webkit-text-stroke:0.25px #4a5b70;">NE - PR</div>
<div class="t" style="left:1722.6px;top:911.7px;font-size:21px;color:#4a5b70;font-weight:400;letter-spacing:0.2px;-webkit-text-stroke:0.25px #4a5b70;">Contador</div>
<div class="t" style="left:2202.7px;top:911.7px;font-size:21px;color:#4a5b70;font-weight:400;letter-spacing:0px;-webkit-text-stroke:0.25px #4a5b70;">Sura</div>
<div class="t" style="left:2472.5px;top:911.7px;font-size:21px;color:#4a5b70;font-weight:400;letter-spacing:0.08px;-webkit-text-stroke:0.25px #4a5b70;">A- (A negativo)</div>
<svg class="a" style="left:2633px;top:911px;" width="29" height="22" viewBox="0 0 29 22"><g fill="none" stroke="#3a4c62" stroke-width="1.8" stroke-linejoin="round">
<path d="M2 19.5 L2 2 L9.5 2 L12.5 5 L22 5 L22 8.5"/>
<path d="M2 19.5 L5.5 8.5 L27 8.5 L23.5 19.5 Z"/></g></svg>
<svg class="a" style="left:2689px;top:909px;" width="25" height="25" viewBox="0 0 25 25"><g fill="none" stroke="#3a4c62" stroke-width="1.8" stroke-linejoin="round">
<path d="M2 17.5 L16.5 3 Q18 1.5 19.5 3 L21.5 5 Q23 6.5 21.5 8 L7 22.5 L2 22.5 Z"/><path d="M14 5.5 L19 10.5"/></g></svg>
<svg class="a" style="left:2749px;top:907px;" width="13" height="30" viewBox="0 0 13 30"><g fill="#3a4c62"><circle cx="6.5" cy="5.5" r="3.3"/><circle cx="6.5" cy="15" r="3.3"/><circle cx="6.5" cy="24.5" r="3.3"/></g></svg>
<div class="a" style="left:2568px;top:479px;width:159px;height:42px;background:#2f3e51;border-radius:9px;"></div>
<svg class="a" style="left:2639px;top:520px;" width="18" height="6" viewBox="0 0 18 6"><path d="M0 0 L18 0 L9 6 Z" fill="#2f3e51"/></svg>
<div class="t" style="left:2580.0px;top:489.7px;font-size:20px;color:#ffffff;font-weight:400;letter-spacing:0.36px;-webkit-text-stroke:0.7px #ffffff;">Revisar carnet</div>
<div class="a" style="left:2617.5px;top:525px;width:60px;height:61px;border:6px solid #ea3a3e;border-radius:15px;"></div>
<svg class="a" style="left:2650px;top:566px;" width="52" height="52" viewBox="0 0 52 52">
<path d="M11 4.5 Q14 1 17.5 4 L26 17 Q27 13.5 30.5 14 Q33 14.5 33.5 17.5 Q35 15 38 16 Q40.5 17 40.5 20 Q42.5 18.5 45 20 Q47.5 22 46.5 27 L45 36 Q44 43 40 46 L30 49 Q26 50 24 47 L7 33 Q4 30 6 27.5 Q8.5 25 12 27 L17 30.5 L9 11 Q8 6.5 11 4.5 Z" fill="#ffffff" stroke="#0b1321" stroke-width="3" stroke-linejoin="round"/>
<g stroke="#0b1321" stroke-width="2.6" stroke-linecap="round"><path d="M26 29 L28.5 40"/><path d="M32 28 L34 39"/><path d="M38 27.5 L39 37.5"/></g>
</svg>
</body></html>
